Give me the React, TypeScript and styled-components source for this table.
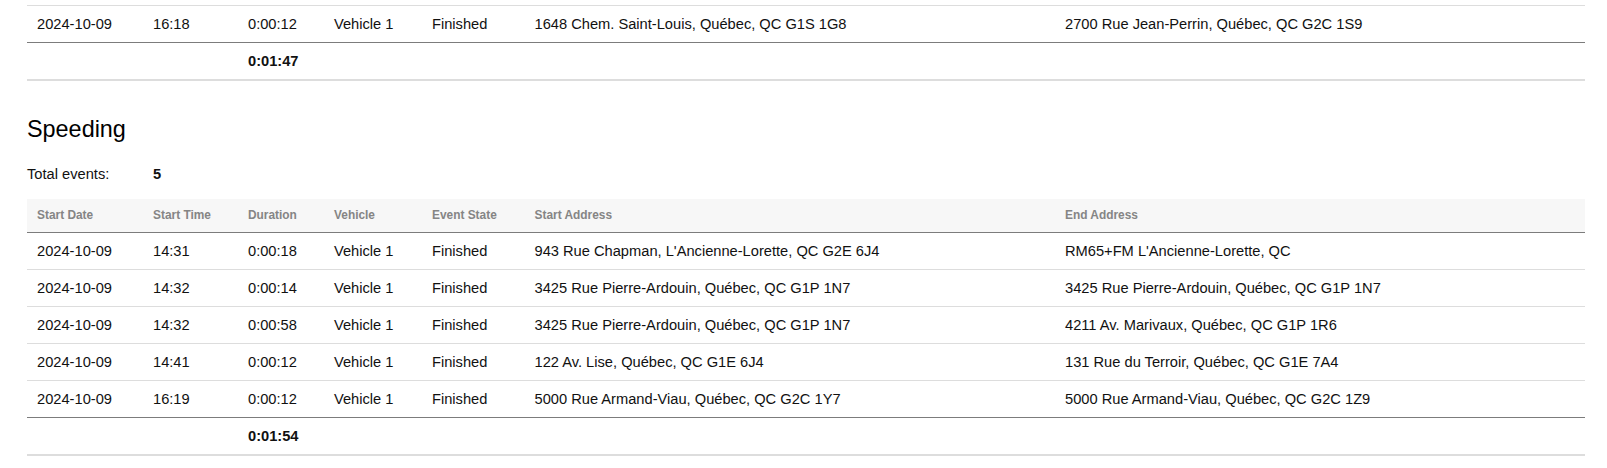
import styled, { createGlobalStyle } from "styled-components";

type Event = {
  date: string;
  time: string;
  duration: string;
  vehicle: string;
  state: string;
  start: string;
  end: string;
};

const previousEvents: Event[] = [
  {
    date: "2024-10-09",
    time: "16:18",
    duration: "0:00:12",
    vehicle: "Vehicle 1",
    state: "Finished",
    start: "1648 Chem. Saint-Louis, Québec, QC G1S 1G8",
    end: "2700 Rue Jean-Perrin, Québec, QC G2C 1S9",
  },
];

const speedingEvents: Event[] = [
  {
    date: "2024-10-09",
    time: "14:31",
    duration: "0:00:18",
    vehicle: "Vehicle 1",
    state: "Finished",
    start: "943 Rue Chapman, L'Ancienne-Lorette, QC G2E 6J4",
    end: "RM65+FM L'Ancienne-Lorette, QC",
  },
  {
    date: "2024-10-09",
    time: "14:32",
    duration: "0:00:14",
    vehicle: "Vehicle 1",
    state: "Finished",
    start: "3425 Rue Pierre-Ardouin, Québec, QC G1P 1N7",
    end: "3425 Rue Pierre-Ardouin, Québec, QC G1P 1N7",
  },
  {
    date: "2024-10-09",
    time: "14:32",
    duration: "0:00:58",
    vehicle: "Vehicle 1",
    state: "Finished",
    start: "3425 Rue Pierre-Ardouin, Québec, QC G1P 1N7",
    end: "4211 Av. Marivaux, Québec, QC G1P 1R6",
  },
  {
    date: "2024-10-09",
    time: "14:41",
    duration: "0:00:12",
    vehicle: "Vehicle 1",
    state: "Finished",
    start: "122 Av. Lise, Québec, QC G1E 6J4",
    end: "131 Rue du Terroir, Québec, QC G1E 7A4",
  },
  {
    date: "2024-10-09",
    time: "16:19",
    duration: "0:00:12",
    vehicle: "Vehicle 1",
    state: "Finished",
    start: "5000 Rue Armand-Viau, Québec, QC G2C 1Y7",
    end: "5000 Rue Armand-Viau, Québec, QC G2C 1Z9",
  },
];

const columns = [
  { label: "Start Date", width: 116 },
  { label: "Start Time", width: 95 },
  { label: "Duration", width: 86 },
  { label: "Vehicle", width: 98 },
  { label: "Event State", width: 102.5 },
  { label: "Start Address", width: 530.5 },
  { label: "End Address", width: 530 },
];

function Cols() {
  return (
    <colgroup>
      {columns.map((c) => (
        <col key={c.label} style={{ width: c.width }} />
      ))}
    </colgroup>
  );
}

function EventRows({ events, topBorder }: { events: Event[]; topBorder?: boolean }) {
  return (
    <tbody>
      {events.map((e, i) => {
        const last = i === events.length - 1;
        const values = [e.date, e.time, e.duration, e.vehicle, e.state, e.start, e.end];
        return (
          <tr key={i}>
            {values.map((v, j) => (
              <Td key={j} $last={last} $top={topBorder && i === 0}>
                {v}
              </Td>
            ))}
          </tr>
        );
      })}
    </tbody>
  );
}

function TotalRow({ total }: { total: string }) {
  return (
    <tfoot>
      <tr>
        <FootCell />
        <FootCell />
        <FootCell>{total}</FootCell>
        <FootCell />
        <FootCell />
        <FootCell />
        <FootCell />
      </tr>
    </tfoot>
  );
}

export default function App() {
  return (
    <>
      <GlobalStyle />
      <Page>
        <Table>
          <Cols />
          <EventRows events={previousEvents} topBorder />
          <TotalRow total="0:01:47" />
        </Table>

        <Title>Speeding</Title>

        <Summary>
          <span>Total events:</span>
          <SummaryValue>5</SummaryValue>
        </Summary>

        <Table>
          <Cols />
          <thead>
            <tr>
              {columns.map((c) => (
                <Th key={c.label}>{c.label}</Th>
              ))}
            </tr>
          </thead>
          <EventRows events={speedingEvents} />
          <TotalRow total="0:01:54" />
        </Table>
      </Page>
    </>
  );
}

const GlobalStyle = createGlobalStyle`
  * {
    box-sizing: border-box;
  }
  body {
    margin: 0;
    background: #ffffff;
    font-family: "Liberation Sans", Arial, Helvetica, sans-serif;
    color: #111111;
  }
`;

const Page = styled.main`
  padding: 5px 0 0 27px;
  width: 1585px;
`;

const Table = styled.table`
  width: 1558px;
  table-layout: fixed;
  border-collapse: separate;
  border-spacing: 0;
  font-size: 14.67px;
`;

const Th = styled.th`
  padding: 8px 10px;
  line-height: 17px;
  text-align: left;
  font-size: 11.9px;
  font-weight: bold;
  color: #858585;
  background-color: #f7f7f7;
  border-bottom: 1px solid #7c7c7c;
  white-space: nowrap;
`;

const Td = styled.td<{ $last?: boolean; $top?: boolean }>`
  padding: 9px 10px;
  line-height: 18px;
  white-space: nowrap;
  border-top: ${(p) => (p.$top ? "1px solid #dddddd" : "none")};
  border-bottom: 1px solid ${(p) => (p.$last ? "#7c7c7c" : "#dddddd")};
`;

const FootCell = styled.td`
  padding: 9px 10px;
  height: 38px;
  line-height: 18px;
  font-weight: bold;
  border-bottom: 2px solid #dddddd;
`;

const Title = styled.h2`
  margin: 34px 0 0;
  font-size: 23.4px;
  line-height: 28px;
  font-weight: normal;
  color: #000000;
`;

const Summary = styled.div`
  display: grid;
  grid-template-columns: 126px auto;
  margin-top: 22px;
  margin-bottom: 16px;
  font-size: 14.67px;
  line-height: 18px;
`;

const SummaryValue = styled.span`
  font-weight: bold;
`;
